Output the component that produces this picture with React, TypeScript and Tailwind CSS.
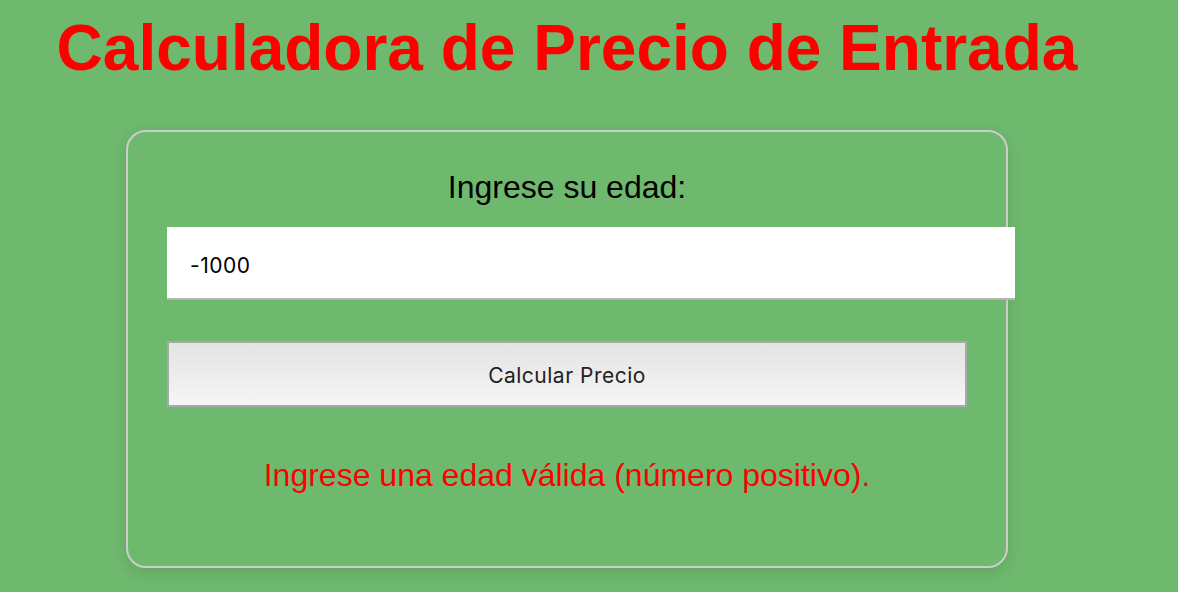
import React, { useState } from 'react'

export default function App() {
  const [edad, setEdad] = useState('-1000')

  return (
    <div className="min-h-screen w-full bg-[#6eb96e] font-['Liberation_Sans',Arial,sans-serif]">
      <div className="w-[1134px] flex flex-col items-center pt-[11px]">
        {/* Title */}
        <h1 className="text-[64px] leading-[74px] font-bold text-[#ff0000] whitespace-nowrap">
          Calculadora de Precio de Entrada
        </h1>

        {/* Card */}
        <div className="mt-[45px] w-[882px] h-[438px] border-2 border-[#cccccc] rounded-[20px] px-[39px] pt-[37px] shadow-[0_4px_14px_rgba(0,0,0,0.12)] flex flex-col">
          <label className="text-[32px] leading-[37px] text-black text-center">Ingrese su edad:</label>

          <input
            type="text"
            value={edad}
            onChange={(e) => setEdad(e.target.value)}
            className="mt-[21px] w-[848px] h-[73px] bg-white pl-[23px] pt-[5px] border-b-2 border-[#b5b5b5] text-[21px] tracking-[0.5px] text-black outline-none font-['Inter',sans-serif]"
          />

          <button className="mt-[41px] w-[800px] h-[66px] pt-[3px] border-2 border-[#a9a9a9] bg-gradient-to-b from-[#e3e3e3] to-[#f6f6f6] text-[21px] tracking-[0.5px] text-[#222222] font-['Inter',sans-serif]">
            Calcular Precio
          </button>

          <p className="mt-[50px] text-[32px] leading-[37px] text-[#ff0000] text-center">
            Ingrese una edad válida (número positivo).
          </p>
        </div>
      </div>
    </div>
  )
}
